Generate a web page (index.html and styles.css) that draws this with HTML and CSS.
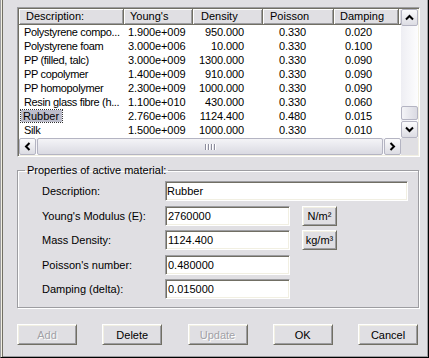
FILE: index.html
```html
<!DOCTYPE html>
<html>

<head>
    <meta charset="utf-8">
    <title>Materials</title>
    <link rel="stylesheet" href="styles.css">
</head>

<body>
    <div class="dialog">
        <div class="listbox">
            <div class="listview">
                <div class="row head">
                    <div class="c desc">Description:</div>
                    <div class="c young">Young's</div>
                    <div class="c dens">Density</div>
                    <div class="c pois">Poisson</div>
                    <div class="c damp">Damping</div>
                    <div class="c fill"></div>
                </div>
                <div class="row">
                    <div class="c desc">Polystyrene compo...</div>
                    <div class="c young">1.900e+009</div>
                    <div class="c dens">950.000</div>
                    <div class="c pois">0.330</div>
                    <div class="c damp">0.020</div>
                </div>
                <div class="row">
                    <div class="c desc">Polystyrene foam</div>
                    <div class="c young">3.000e+006</div>
                    <div class="c dens">10.000</div>
                    <div class="c pois">0.330</div>
                    <div class="c damp">0.100</div>
                </div>
                <div class="row">
                    <div class="c desc">PP (filled, talc)</div>
                    <div class="c young">3.000e+009</div>
                    <div class="c dens">1300.000</div>
                    <div class="c pois">0.330</div>
                    <div class="c damp">0.090</div>
                </div>
                <div class="row">
                    <div class="c desc">PP copolymer</div>
                    <div class="c young">1.400e+009</div>
                    <div class="c dens">910.000</div>
                    <div class="c pois">0.330</div>
                    <div class="c damp">0.090</div>
                </div>
                <div class="row">
                    <div class="c desc">PP homopolymer</div>
                    <div class="c young">2.300e+009</div>
                    <div class="c dens">1000.000</div>
                    <div class="c pois">0.330</div>
                    <div class="c damp">0.090</div>
                </div>
                <div class="row">
                    <div class="c desc">Resin glass fibre (h...</div>
                    <div class="c young">1.100e+010</div>
                    <div class="c dens">430.000</div>
                    <div class="c pois">0.330</div>
                    <div class="c damp">0.060</div>
                </div>
                <div class="row">
                    <div class="c desc"><span class="selected">Rubber</span></div>
                    <div class="c young">2.760e+006</div>
                    <div class="c dens">1124.400</div>
                    <div class="c pois">0.480</div>
                    <div class="c damp">0.015</div>
                </div>
                <div class="row">
                    <div class="c desc">Silk</div>
                    <div class="c young">1.500e+009</div>
                    <div class="c dens">1000.000</div>
                    <div class="c pois">0.330</div>
                    <div class="c damp">0.010</div>
                </div>
            </div>
            <div class="vscroll">
                <div class="arrow">
                    <svg width="9" height="9" viewBox="0 0 9 9"><path d="M1 6.5 L4.5 3 L8 6.5" fill="none" stroke="#000" stroke-width="2"/></svg>
                </div>
                <div class="track vtrack">
                    <div class="thumb vthumb"></div>
                </div>
                <div class="arrow">
                    <svg width="9" height="9" viewBox="0 0 9 9"><path d="M1 2.5 L4.5 6 L8 2.5" fill="none" stroke="#000" stroke-width="2"/></svg>
                </div>
            </div>
            <div class="hscroll">
                <div class="arrow">
                    <svg width="9" height="9" viewBox="0 0 9 9"><path d="M6.5 1 L3 4.5 L6.5 8" fill="none" stroke="#000" stroke-width="2"/></svg>
                </div>
                <div class="track htrack">
                    <div class="thumb hthumb">
                        <span class="grip"></span><span class="grip"></span><span class="grip"></span><span class="grip"></span>
                    </div>
                </div>
                <div class="arrow">
                    <svg width="9" height="9" viewBox="0 0 9 9"><path d="M2.5 1 L6 4.5 L2.5 8" fill="none" stroke="#000" stroke-width="2"/></svg>
                </div>
            </div>
            <div class="corner"></div>
        </div>

        <fieldset class="group">
            <legend>Properties of active material:</legend>
            <div class="props">
                <label>Description:</label>
                <input class="field wide" value="Rubber">

                <label>Young's Modulus (E):</label>
                <input class="field" value="2760000">
                <button class="btn unit">N/m&sup2;</button>

                <label>Mass Density:</label>
                <input class="field" value="1124.400">
                <button class="btn unit">kg/m&sup3;</button>

                <label>Poisson's number:</label>
                <input class="field" value="0.480000">
                <span></span>

                <label>Damping (delta):</label>
                <input class="field" value="0.015000">
                <span></span>
            </div>
        </fieldset>

        <div class="buttons">
            <button class="btn action" disabled>Add</button>
            <button class="btn action">Delete</button>
            <button class="btn action" disabled>Update</button>
            <button class="btn action">OK</button>
            <button class="btn action">Cancel</button>
        </div>
    </div>
</body>

</html>
```

FILE: styles.css
```css
body {
    margin: 0;
    background-color: #e0dfe3;
    font-family: "Liberation Sans", Arial, sans-serif;
    font-size: 11px;
    color: #000;
}

.dialog {
    width: 429px;
    height: 358px;
    box-sizing: border-box;
    padding: 7px 8px 0 16px;
    background-color: #e0dfe3;
    border-left: 1px solid #9d9da1;
    border-right: 1px solid #000;
    border-bottom: 1px solid #000;
    box-shadow: inset 1px 0 0 #f1efe2, inset 2px 0 0 #716f64, inset -1px -1px 0 #9d9da1;
}

/* list of materials */

.listbox {
    width: 403px;
    height: 150px;
    box-sizing: border-box;
    display: grid;
    grid-template-columns: 382px 17px;
    grid-template-rows: 129px 17px;
    background: #fff;
    border-top: 1px solid #9d9da1;
    border-left: 1px solid #9d9da1;
    border-right: 1px solid #fff;
    border-bottom: 1px solid #fff;
    box-shadow: inset 1px 1px 0 #716f64, inset -1px -1px 0 #f1efe2;
    padding: 1px;
}

.listview {
    overflow: hidden;
    background: #fff;
}

.row {
    display: grid;
    grid-template-columns: 105px 69px 70px 71px 65px 1fr;
    height: 14px;
    line-height: 14px;
    white-space: nowrap;
    letter-spacing: -0.1px;
}

.row .desc {
    padding-left: 5px;
    letter-spacing: -0.35px;
}

.row .young {
    padding-left: 4px;
}

.row .dens {
    text-align: right;
    padding-right: 19px;
}

.row .pois {
    padding-left: 16px;
}

.row .damp {
    padding-left: 11px;
}

.row.head {
    height: 16px;
    line-height: 14px;
    background: #e0dfe3;
    letter-spacing: 0;
}

.row.head .c {
    box-sizing: border-box;
    text-align: left;
    padding: 0 0 0 7px;
    letter-spacing: 0;
    border-right: 1px solid #716f64;
    border-bottom: 1px solid #716f64;
    box-shadow: inset 1px 1px 0 #fff, inset -1px -1px 0 #9d9da1;
}

.row.head .young,
.row.head .damp {
    padding-left: 6px;
}

.row.head .dens {
    padding-left: 8px;
}

.row.head .fill {
    border-right: none;
}

.selected {
    display: inline-block;
    margin-left: -3px;
    padding: 0 3px 0 2px;
    height: 12px;
    line-height: 12px;
    background: #bcbdcb;
    outline: 1px dotted #333;
    letter-spacing: 0;
}

/* scrollbars */

.vscroll {
    display: flex;
    flex-direction: column;
}

.hscroll {
    display: flex;
}

.arrow {
    width: 17px;
    height: 17px;
    box-sizing: border-box;
    display: flex;
    align-items: center;
    justify-content: center;
    background: linear-gradient(#fbfbfc, #dcdce3);
    border: 1px solid #b4b4c2;
    border-radius: 2px;
}

.track {
    flex: 1;
    display: flex;
    background: linear-gradient(to right, #eeeef3, #fdfdfe);
}

.vtrack {
    flex-direction: column;
    justify-content: flex-end;
}

.htrack {
    background: linear-gradient(#eeeef3, #fdfdfe);
}

.thumb {
    box-sizing: border-box;
    background: linear-gradient(to right, #f4f4f7, #dadae2);
    border: 1px solid #b4b4c2;
    border-radius: 2px;
}

.vthumb {
    height: 14px;
    margin: 0 0 1px 0;
}

.hthumb {
    flex: 1;
    margin: 0 1px;
    display: flex;
    align-items: center;
    justify-content: center;
    gap: 1px;
    background: linear-gradient(#f4f4f7, #dadae2);
}

.grip {
    width: 1px;
    height: 6px;
    background: #8c8c9c;
    box-shadow: 1px 0 0 #fff;
    margin-right: 1px;
}

.corner {
    background: #e0dfe3;
}

/* properties group */

.group {
    width: 402px;
    box-sizing: border-box;
    margin: 7px 0 0 0;
    padding: 4px 0 8px 7px;
    border: 1px solid #9d9da1;
    box-shadow: 1px 1px 0 #fff, inset 1px 1px 0 #fff;
    min-width: 0;
}

.group legend {
    padding: 0 2px;
    line-height: 13px;
}

.props {
    display: grid;
    grid-template-columns: 123px 125px 47px;
    grid-auto-rows: 20px;
    row-gap: 4.5px;
    align-items: center;
    padding-left: 17px;
}

.field {
    box-sizing: border-box;
    height: 20px;
    width: 125px;
    margin: 0;
    padding: 0 0 0 2px;
    font-family: "Liberation Sans", Arial, sans-serif;
    font-size: 11px;
    color: #000;
    background: #fff;
    border-top: 1px solid #9d9da1;
    border-left: 1px solid #9d9da1;
    border-right: 1px solid #fff;
    border-bottom: 1px solid #fff;
    box-shadow: inset 1px 1px 0 #716f64, inset -1px -1px 0 #f1efe2;
    outline: none;
}

.field.wide {
    width: 243px;
    grid-column: 2 / span 2;
    padding-left: 1px;
}

/* buttons */

.btn {
    box-sizing: border-box;
    margin: 0;
    padding: 0;
    font-family: "Liberation Sans", Arial, sans-serif;
    font-size: 11px;
    color: #000;
    background: #e0dfe3;
    border-top: 1px solid #fff;
    border-left: 1px solid #fff;
    border-right: 1px solid #716f64;
    border-bottom: 1px solid #716f64;
    box-shadow: inset 1px 1px 0 #f1efe2, inset -1px -1px 0 #9d9da1;
}

.btn:disabled {
    color: #a2a1a6;
    text-shadow: 1px 1px 0 #fff;
}

.unit {
    width: 35px;
    height: 20px;
    margin-left: 12px;
}

.buttons {
    width: 401px;
    margin-top: 16px;
    display: flex;
    justify-content: space-between;
}

.action {
    width: 60px;
    height: 21px;
}
```
